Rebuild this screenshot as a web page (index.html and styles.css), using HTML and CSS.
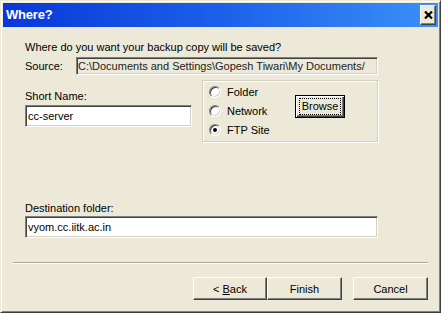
FILE: index.html
```html
<html>
<head>
<title>Where?</title>
<link rel="stylesheet" href="styles.css">
</head>
<body>
<div class="window">
  <div class="titlebar">
    <span class="title">Where?</span>
    <div class="close" title="Close">
      <svg width="9" height="8" viewBox="0 0 9 8"><path d="M1 0.5 L8 7.5 M8 0.5 L1 7.5" stroke="#000" stroke-width="2.2" fill="none"/></svg>
    </div>
  </div>

  <div class="content">
    <p class="prompt">Where do you want your backup copy will be saved?</p>
    <div class="source-row">
      <span class="source-label">Source:</span>
      <div class="field readonly source-field">C:\Documents and Settings\Gopesh Tiwari\My Documents/</div>
    </div>

    <div class="middle">
      <div class="short-name">
        <div class="label">Short Name:</div>
        <div class="field short-field">cc-server</div>
      </div>
      <div class="group">
        <div class="radios">
          <div class="radio-row"><span class="radio"></span>Folder</div>
          <div class="radio-row"><span class="radio"></span>Network</div>
          <div class="radio-row"><span class="radio checked"></span>FTP Site</div>
        </div>
        <div class="btn default browse"><span class="focus">Browse</span></div>
      </div>
    </div>

    <div class="dest">
      <div class="label">Destination folder:</div>
      <div class="field dest-field">vyom.cc.iitk.ac.in</div>
    </div>
  </div>

  <div class="separator"></div>

  <div class="buttons">
    <div class="btn back"><span>&lt; <u>B</u>ack</span></div>
    <div class="btn wide">Finish</div>
    <div class="btn wide cancel">Cancel</div>
  </div>
</div>
</body>
</html>
```

FILE: styles.css
```css
html,body {margin:0; padding:0; background:#ECE9D8; font:11px/14px "Liberation Sans", Arial, sans-serif; color:#000;}

.window {width:441px; height:313px; box-sizing:border-box; padding:2px; border:1px solid; border-color:#ECE9D8 #404040 #404040 #ECE9D8; box-shadow:inset 1px 1px 0 #fff, inset -1px -1px 0 #808080; display:flex; flex-direction:column;}

.titlebar {height:24px; flex:none; display:flex; align-items:center; justify-content:space-between; padding:0 2px 0 3px; background:linear-gradient(to right, #0838d8 0%, #1c60ea 50%, #3a90f8 100%);}
.title {font-weight:bold; font-size:13px; color:#fff; letter-spacing:-0.2px;}
.close {width:16px; height:20px; box-sizing:border-box; display:flex; align-items:center; justify-content:center; background:#ECE9D8; border:1px solid; border-color:#fff #404040 #404040 #fff; box-shadow:inset -1px -1px 0 #808080;}
.close svg {display:block;}

.content {padding:0 0 0 22px;}
.prompt {margin:13px 0 3px;}

.field {box-sizing:border-box; height:22px; padding:3px 2px 0; background:#fff; border:1px solid; border-color:#808080 #fff #fff #808080; box-shadow:inset 1px 1px 0 #404040, inset -1px -1px 0 #d4d0c8; white-space:nowrap; overflow:hidden;}
.field.readonly {background:#ECE9D8; color:#222;}

.source-row {display:flex; align-items:center; height:18px;}
.source-label {width:51px;}
.source-field {width:302px; height:18px; padding:1px 1px 0;}

.middle {display:flex; gap:10px; margin-top:5px;}
.short-name {width:167px; padding-top:9px;}
.short-field {margin-top:2px;}

.group {width:176px; height:62px; box-sizing:border-box; display:flex; padding:1px 0 0 6px; border:1px solid #D0D0BF; box-shadow:inset 1px 1px 0 #fff, 1px 1px 0 #fff;}
.radios {width:80px;}
.radio-row {height:19px; display:flex; align-items:center;}
.radio {width:12px; height:12px; box-sizing:border-box; margin-right:6px; border-radius:50%; background:#fff; border:1px solid; border-color:#808080 #fff #fff #808080; box-shadow:inset 1px 1px 0 #404040, inset -1px -1px 0 #d4d0c8; display:flex; align-items:center; justify-content:center;}
.radio.checked::after {content:""; width:4px; height:4px; border-radius:50%; background:#000;}

.btn {box-sizing:border-box; height:23px; display:flex; align-items:center; justify-content:center; background:#ECE9D8; border:1px solid; border-color:#fff #404040 #404040 #fff; box-shadow:inset -1px -1px 0 #808080;}
.btn.default {border-color:#000; box-shadow:inset 1px 1px 0 #fff, inset -1px -1px 0 #404040, inset -2px -2px 0 #808080;}
.browse {width:50px; margin:13px 0 0 6px;}
.focus {outline:1px dotted #000; outline-offset:1px; padding:0 1px; line-height:13px;}

.dest {margin-top:59px;}
.dest-field {width:353px; margin-top:1px;}

.separator {height:0; margin:24px 10px 0; border-top:1px solid #ACA899; border-bottom:1px solid #fff;}

.buttons {display:flex; justify-content:flex-end; padding-right:10px; margin-top:13px;}
.btn.back {width:74px;}
.btn.wide {width:75px;}
.btn.cancel {margin-left:11px;}
```
